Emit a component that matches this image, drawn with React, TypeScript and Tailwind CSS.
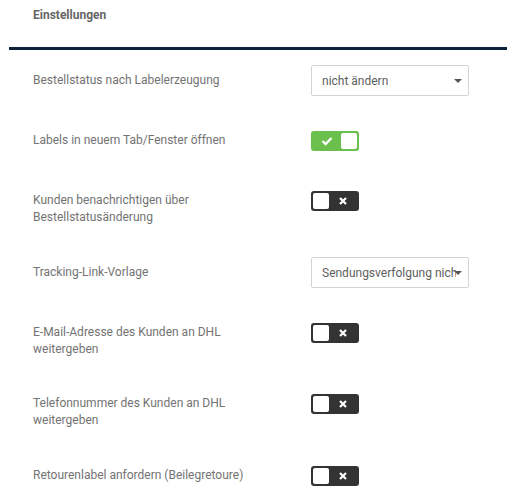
import { useState } from 'react';

type Row =
  | { kind: 'select'; label: string; value: string; h: string }
  | { kind: 'toggle'; label: string; on: boolean; h: string };

const rows: Row[] = [
  { kind: 'select', label: 'Bestellstatus nach Labelerzeugung', value: 'nicht ändern', h: 'h-[66px]' },
  { kind: 'toggle', label: 'Labels in neuem Tab/Fenster öffnen', on: true, h: 'h-[60px]' },
  { kind: 'toggle', label: 'Kunden benachrichtigen über Bestellstatusänderung', on: false, h: 'h-[66px]' },
  { kind: 'select', label: 'Tracking-Link-Vorlage', value: 'Sendungsverfolgung nicht anzeigen', h: 'h-[66px]' },
  { kind: 'toggle', label: 'E-Mail-Adresse des Kunden an DHL weitergeben', on: false, h: 'h-[71px]' },
  { kind: 'toggle', label: 'Telefonnummer des Kunden an DHL weitergeben', on: false, h: 'h-[72px]' },
  { kind: 'toggle', label: 'Retourenlabel anfordern (Beilegretoure)', on: false, h: 'h-[34px]' },
];

const Toggle = ({ initial }: { initial: boolean }) => {
  const [on, setOn] = useState(initial);
  return (
    <button
      type="button"
      onClick={() => setOn(!on)}
      className={`flex h-[20px] w-[48px] items-center rounded-[3px] p-[2px] ${
        on ? 'flex-row bg-[#6bbf4c]' : 'flex-row-reverse bg-[#333333]'
      }`}
    >
      <span className="flex flex-1 items-center justify-center">
        {on ? (
          <svg width="12" height="10" viewBox="0 0 12 10">
            <path d="M1.5 5 L4.6 8 L10.5 2" fill="none" stroke="#fff" strokeWidth="2.4" />
          </svg>
        ) : (
          <svg width="8" height="8" viewBox="0 0 8 8">
            <path d="M1 1 L7 7 M7 1 L1 7" fill="none" stroke="#fff" strokeWidth="2.2" />
          </svg>
        )}
      </span>
      <span className="h-[16px] w-[16px] rounded-[2px] bg-white" />
    </button>
  );
};

const Select = ({ value }: { value: string }) => (
  <div className="relative flex h-[31px] w-[158px] items-center rounded-[2px] border border-[#d4d4d4] bg-white pl-[10px] pr-[12px]">
    <span className="overflow-hidden whitespace-nowrap text-[12px] text-[#5e5e5e]">{value}</span>
    <svg className="absolute right-[6px] top-[13px]" width="8" height="4" viewBox="0 0 8 4">
      <path d="M0 0 H8 L4 4 Z" fill="#555" />
    </svg>
  </div>
);

export default function App() {
  return (
    <div className="h-[500px] w-[516px] bg-white font-['Roboto',sans-serif]">
      <div className="px-[33px] pt-[7px] text-[12px] font-bold leading-[17px] text-[#666]">Einstellungen</div>
      <div className="mx-[9px] mt-[23px] h-[3px] bg-[#0c2238]" />
      <div className="mt-[15px] px-[33px]">
        {rows.map((row) => (
          <div key={row.label} className={`flex items-start ${row.h}`}>
            <div
              className={`w-[278px] pr-[30px] text-[12px] leading-[17px] text-[#737373] ${
                row.kind === 'select' ? 'pt-[7px]' : 'pt-[1px]'
              }`}
            >
              {row.label}
            </div>
            {row.kind === 'select' ? <Select value={row.value} /> : <Toggle initial={row.on} />}
          </div>
        ))}
      </div>
    </div>
  );
}
